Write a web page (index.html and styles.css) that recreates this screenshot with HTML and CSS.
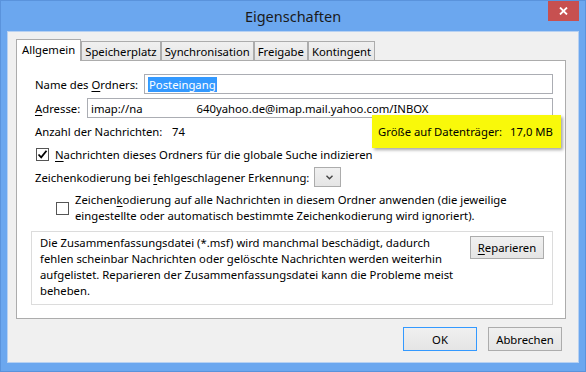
FILE: index.html
```html
<!DOCTYPE html>
<html lang="de">
<head>
  <meta charset="UTF-8" />
  <title>Eigenschaften</title>
  <link rel="stylesheet" href="styles.css">
</head>
<body>
  <div class="window">
    <div class="titlebar">
      <span class="title">Eigenschaften</span>
      <button class="close" aria-label="Schließen">
        <svg width="9" height="8" viewBox="0 0 9 8"><path d="M1 0.5 L8 7.5 M8 0.5 L1 7.5" stroke="#fff" stroke-width="1.8" fill="none"/></svg>
      </button>
    </div>

    <div class="client">
      <div class="tabs">
        <div class="tab active">Allgemein</div>
        <div class="tab">Speicherplatz</div>
        <div class="tab">Synchronisation</div>
        <div class="tab">Freigabe</div>
        <div class="tab">Kontingent</div>
      </div>

      <div class="panel">
        <div class="row name-row">
          <label class="lbl">Name des <u>O</u>rdners:</label>
          <div class="field"><span class="selected">Posteingang</span></div>
        </div>

        <div class="row addr-row">
          <label class="lbl"><u>A</u>dresse:</label>
          <div class="field">imap://na<span class="redacted"></span>640yahoo.de@imap.mail.yahoo.com/INBOX</div>
        </div>

        <div class="row count-row">
          <span class="lbl">Anzahl der Nachrichten:</span>
          <span>74</span>
        </div>

        <div class="tooltip">
          <span class="tip-label">Größe auf Datenträger:</span>
          <span>17,0 MB</span>
        </div>

        <div class="check-row">
          <span class="checkbox">
            <svg width="11" height="11" viewBox="0 0 11 11"><path d="M1.5 5.5 L4.2 8.3 L9.5 1.8" stroke="#000" stroke-width="1.8" fill="none"/></svg>
          </span>
          <span><u>N</u>achrichten dieses Ordners für die globale Suche indizieren</span>
        </div>

        <div class="row charset-row">
          <span class="lbl">Zeichenkodierung bei <u>f</u>ehlgeschlagener Erkennung:</span>
          <span class="dropdown">
            <svg width="7" height="5" viewBox="0 0 7 5"><path d="M0.5 0.8 L3.5 3.8 L6.5 0.8" stroke="#444" stroke-width="1.4" fill="none"/></svg>
          </span>
        </div>

        <div class="check-row multi">
          <span class="checkbox"></span>
          <span>Zeichen<u>k</u>odierung auf alle Nachrichten in diesem Ordner anwenden (die jeweilige<br>eingestellte oder automatisch bestimmte Zeichenkodierung wird ignoriert).</span>
        </div>

        <div class="summary">
          <p>Die Zusammenfassungsdatei (*.msf) wird manchmal beschädigt, dadurch<br>fehlen scheinbar Nachrichten oder gelöschte Nachrichten werden weiterhin<br>aufgelistet. Reparieren der Zusammenfassungsdatei kann die Probleme meist<br>beheben.</p>
          <button class="btn repair"><u>R</u>eparieren</button>
        </div>
      </div>

      <div class="footer">
        <button class="btn default">OK</button>
        <button class="btn">Abbrechen</button>
      </div>
    </div>
  </div>
</body>
</html>
```

FILE: styles.css
```css
* {
  box-sizing: border-box;
}
body {
  margin: 0;
  font-family: 'Noto Sans', 'Open Sans', sans-serif;
  font-size: 11.3px;
  color: #000;
}
u {
  text-decoration-thickness: 1px;
  text-underline-offset: 2px;
}

/* window frame */
.window {
  width: 586px;
  height: 372px;
  background: #6ba7ef;
  border: 1px solid #5a93dc;
  padding: 0 6px 8px;
  display: flex;
  flex-direction: column;
}
.titlebar {
  height: 30px;
  display: grid;
  grid-template-columns: 1fr auto 1fr;
}
.title {
  grid-column: 2;
  align-self: center;
  font-size: 14.5px;
  color: #1a1a1a;
  padding-bottom: 1px;
}
.close {
  grid-column: 3;
  justify-self: end;
  align-self: start;
  width: 31px;
  height: 20px;
  padding: 0;
  border: none;
  background: #c75050;
  display: flex;
  align-items: center;
  justify-content: center;
}
.client {
  flex: 1;
  background: #f0f0f0;
  border: 1px solid #b7d1f2;
  padding: 7px 12px 11px 8px;
  display: flex;
  flex-direction: column;
}

/* tabs */
.tabs {
  height: 21px;
  display: flex;
  align-items: flex-end;
}
.tab {
  height: 19px;
  padding: 0 3px;
  border: 1px solid #acacac;
  border-bottom: none;
  background: linear-gradient(#f0f0f0, #e5e5e5);
  display: flex;
  align-items: center;
}
.tab.active {
  height: 22px;
  margin-bottom: -1px;
  padding: 0 5px 2px;
  background: #fff;
  position: relative;
  z-index: 1;
}

.panel {
  flex: 1;
  position: relative;
  background: #fff;
  border: 1px solid #acacac;
  padding: 13px 12px 0 14px;
}

/* form rows */
.row {
  height: 20px;
  display: flex;
  align-items: center;
  padding-left: 4px;
}
.name-row .lbl { width: 109px; }
.addr-row { margin-top: 4px; }
.addr-row .lbl { width: 52px; }
.count-row { margin-top: 3px; }
.count-row .lbl { width: 137px; }
.charset-row { margin-top: 3px; }
.charset-row .lbl { width: 279px; }

.field {
  flex: 1;
  height: 20px;
  border: 1px solid #abadb3;
  background: #fff;
  padding: 0 3px;
  display: flex;
  align-items: center;
  white-space: nowrap;
  overflow: hidden;
}
.selected {
  background: #3399ff;
  color: #fff;
  line-height: 15px;
  padding: 0 1px;
}
.redacted {
  display: inline-block;
  width: 54px;
}

.check-row {
  height: 20px;
  margin-top: 3px;
  padding-left: 5px;
  display: flex;
  align-items: center;
  gap: 6px;
}
.check-row.multi {
  height: auto;
  margin-top: 5px;
  padding-left: 25px;
  line-height: 16px;
}
.checkbox {
  width: 13px;
  height: 13px;
  flex: none;
  border: 1px solid #555;
  background: #fff;
  display: flex;
  align-items: center;
  justify-content: center;
}

.dropdown {
  width: 27px;
  height: 20px;
  border: 1px solid #acacac;
  background: linear-gradient(#f0f0f0, #e5e5e5);
  display: flex;
  align-items: center;
  justify-content: center;
  padding-left: 4px;
}

.tooltip {
  position: absolute;
  left: 355px;
  top: 54px;
  width: 189px;
  height: 33px;
  background: #f9f90a;
  box-shadow: 2px 2px 3px rgba(0,0,0,0.35);
  padding-left: 6px;
  display: flex;
  align-items: center;
}
.tip-label {
  width: 132px;
}

.summary {
  margin-top: 7px;
  border: 1px solid #dcdcdc;
  padding: 3px 8px 5px;
  display: flex;
  justify-content: space-between;
  align-items: flex-start;
}
.summary p {
  margin: 0;
  line-height: 16px;
}

/* buttons */
.btn {
  width: 74px;
  height: 24px;
  padding: 0;
  font: inherit;
  color: #000;
  border: 1px solid #acacac;
  background: linear-gradient(#f0f0f0, #e5e5e5);
}
.btn.repair {
  height: 23px;
  margin-top: 1px;
}
.btn.default {
  border-color: #3399ff;
}
.footer {
  margin-top: 8px;
  padding-right: 4px;
  display: flex;
  justify-content: flex-end;
  gap: 11px;
}
```
